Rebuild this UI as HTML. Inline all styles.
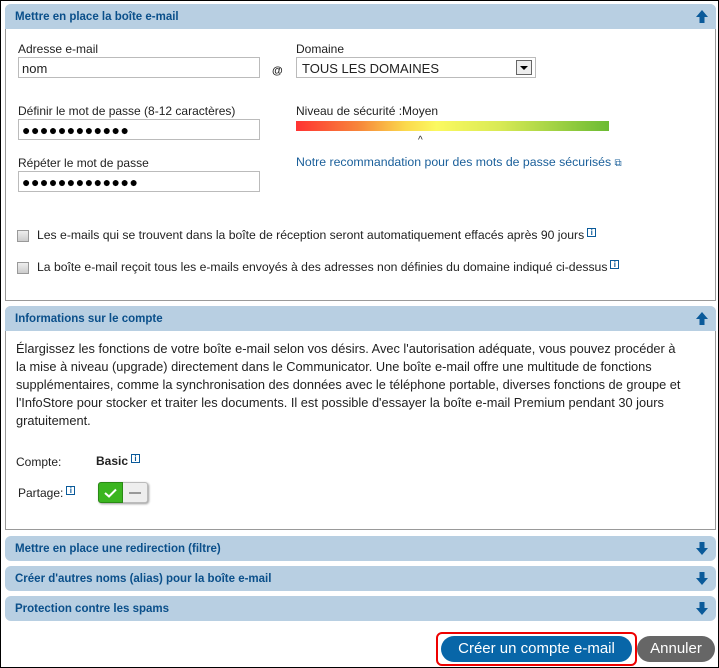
<!DOCTYPE html>
<html><head><meta charset="utf-8"><style>
*{box-sizing:border-box;margin:0;padding:0}
body{width:719px;height:668px;position:relative;background:#fff;font-family:"Liberation Sans",sans-serif;font-size:12px;color:#222;overflow:hidden;border:1px solid #000}
.a{position:absolute;white-space:nowrap}
.panel{position:absolute;left:4px;width:711px;border:1px solid #999;border-top:none;border-radius:6px 6px 0 0}
.hdr{position:absolute;left:4px;width:711px;height:25px;background:#b8cfe2;border-radius:6px;color:#0a4f8a;font-weight:bold;font-size:11.5px;padding:7px 0 0 10px}
.hdr.open{border-radius:6px 6px 0 0}
.arr{position:absolute;right:8px;top:6px;width:12px;height:13px}
.inp{position:absolute;border:1px solid #bbb;height:21px;background:#fff;padding:3px 0 0 3px;font-size:13px}
.dots{font-size:14px;letter-spacing:0.5px;color:#000;line-height:13px}
.cb{position:absolute;width:12px;height:12px;border:1px solid #999;background:linear-gradient(#eee,#ccc)}
.info{display:inline-block;width:9px;height:9px;border:1px solid #0a5a9a;font-size:8px;line-height:7px;text-align:center;color:#0a5a9a;font-weight:bold;vertical-align:4px;margin-left:3px}
</style></head><body>
<div class="panel" style="top:3px;height:297px"></div>
<div class="hdr open" style="top:3px">Mettre en place la boîte e-mail<svg class="arr" viewBox="0 0 12 13"><path d="M6 0L12 7H8.5V13H3.5V7H0Z" fill="#0a5a9a"/></svg></div>
<div class="a" style="left:17px;top:41px">Adresse e-mail</div>
<div class="inp" style="left:17px;top:56px;width:242px">nom</div>
<div class="a" style="left:271px;top:64px;font-weight:bold;font-size:11px">@</div>
<div class="a" style="left:295px;top:41px">Domaine</div>
<div class="inp" style="left:295px;top:56px;width:240px;padding-left:5px">TOUS LES DOMAINES<div style="position:absolute;right:3px;top:2px;width:16px;height:15px;border:1px solid #666;background:#eee"><div style="margin:5px auto 0;width:0;height:0;border-left:4px solid transparent;border-right:4px solid transparent;border-top:4px solid #000"></div></div></div>
<div class="a" style="left:17px;top:103px">Définir le mot de passe (8-12 caractères)</div>
<div class="inp dots" style="left:17px;top:118px;width:242px;padding-top:4px">●●●●●●●●●●●●</div>
<div class="a" style="left:295px;top:103px">Niveau de sécurité :Moyen</div>
<div class="a" style="left:295px;top:120px;width:313px;height:10px;background:linear-gradient(90deg,#f33 0%,#f7863a 20%,#fbd94d 35%,#fbf960 45%,#d9ea55 65%,#6bbb33 100%)"></div>
<div class="a" style="left:417px;top:134px;font-size:10px">^</div>
<div class="a" style="left:17px;top:155px">Répéter le mot de passe</div>
<div class="inp dots" style="left:17px;top:170px;width:242px;padding-top:4px">●●●●●●●●●●●●●</div>
<div class="a" style="left:295px;top:154px;color:#1a5f9a;font-size:12.3px">Notre recommandation pour des mots de passe sécurisés <span style="font-size:10px">⧉</span></div>
<div class="cb" style="left:16px;top:229px"></div>
<div class="a" style="left:36px;top:227px;font-size:12.2px">Les e-mails qui se trouvent dans la boîte de réception seront automatiquement effacés après 90 jours<span class="info">i</span></div>
<div class="cb" style="left:16px;top:261px"></div>
<div class="a" style="left:36px;top:259px;font-size:12.2px">La boîte e-mail reçoit tous les e-mails envoyés à des adresses non définies du domaine indiqué ci-dessus<span class="info">i</span></div>

<div class="panel" style="top:305px;height:224px"></div>
<div class="hdr open" style="top:305px">Informations sur le compte<svg class="arr" viewBox="0 0 12 13"><path d="M6 0L12 7H8.5V13H3.5V7H0Z" fill="#0a5a9a"/></svg></div>
<div class="a" style="left:15px;top:339px;line-height:18px;font-size:12.8px">Élargissez les fonctions de votre boîte e-mail selon vos désirs. Avec l'autorisation adéquate, vous pouvez procéder à<br>la mise à niveau (upgrade) directement dans le Communicator. Une boîte e-mail offre une multitude de fonctions<br>supplémentaires, comme la synchronisation des données avec le téléphone portable, diverses fonctions de groupe et<br>l'InfoStore pour stocker et traiter les documents. Il est possible d'essayer la boîte e-mail Premium pendant 30 jours<br>gratuitement.</div>
<div class="a" style="left:15px;top:454px">Compte:</div>
<div class="a" style="left:95px;top:453px;font-weight:bold">Basic<span class="info">i</span></div>
<div class="a" style="left:17px;top:485px">Partage:<span class="info">i</span></div>
<div class="a" style="left:97px;top:481px;width:50px;height:21px;border-radius:3px;background:#eee;box-shadow:1px 1px 2px #999;border:1px solid #bbb"></div>
<div class="a" style="left:97px;top:481px;width:25px;height:21px;background:#3bb520;border:1px solid #2a8a15;border-radius:3px 0 0 3px"><svg width="23" height="19"><path d="M6 10l4 3.5 7-7" stroke="#fff" stroke-width="2" fill="none"/></svg></div>
<div class="a" style="left:128px;top:491px;width:12px;height:2px;background:#999"></div>

<div class="hdr" style="top:535px">Mettre en place une redirection (filtre)<svg class="arr" viewBox="0 0 12 13"><path d="M6 13L12 6H8.5V0H3.5V6H0Z" fill="#0a5a9a"/></svg></div>
<div class="hdr" style="top:565px">Créer d'autres noms (alias) pour la boîte e-mail<svg class="arr" viewBox="0 0 12 13"><path d="M6 13L12 6H8.5V0H3.5V6H0Z" fill="#0a5a9a"/></svg></div>
<div class="hdr" style="top:595px">Protection contre les spams<svg class="arr" viewBox="0 0 12 13"><path d="M6 13L12 6H8.5V0H3.5V6H0Z" fill="#0a5a9a"/></svg></div>

<div class="a" style="left:435px;top:631px;width:201px;height:34px;border:2px solid #e00;border-radius:6px"></div>
<div class="a" style="left:440px;top:635px;width:191px;height:26px;background:#0866a8;border-radius:13px;color:#fff;font-size:15px;text-align:center;line-height:26px">Créer un compte e-mail</div>
<div class="a" style="left:636px;top:635px;width:78px;height:26px;background:#666;border-radius:13px;color:#fff;font-size:15px;text-align:center;line-height:26px">Annuler</div>
</body></html>
